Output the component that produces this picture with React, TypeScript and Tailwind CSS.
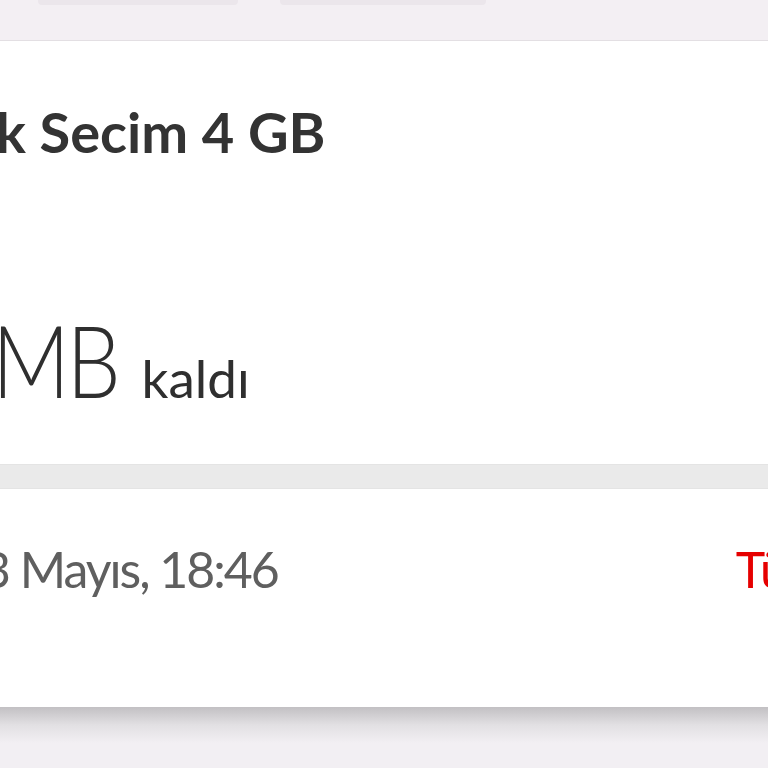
import React from 'react';

const font = { fontFamily: 'Lato, "Open Sans", sans-serif' };

export default function App() {
  return (
    <div className="w-full h-[768px] overflow-hidden bg-[#f2eff3] flex flex-col" style={font}>
      {/* strip above the card */}
      <div className="h-[41px] shrink-0 bg-[#f3eff3] border-b border-[#e3dfe3]">
        <div className="flex gap-[42px] pl-[38px]">
          <div className="w-[200px] h-[5px] bg-[#ebe6eb] rounded-b-sm" />
          <div className="w-[206px] h-[5px] bg-[#ebe6eb] rounded-b-sm" />
        </div>
      </div>

      {/* package card */}
      <div className="h-[423px] shrink-0 bg-white flex flex-col">
        <div className="pt-[63px] -ml-[4px] text-[56px] leading-none font-bold text-[#333333] whitespace-nowrap">
          k Secim 4 GB
        </div>
        <div className="mt-[149px] -ml-[8px] flex items-baseline text-[#2f2f2f] whitespace-nowrap">
          <span className="text-[101px] leading-none font-light tracking-[-4px] scale-x-[0.85] origin-left mr-[2px]">MB</span>
          <span className="text-[53px] leading-none">kaldı</span>
        </div>
      </div>

      <div className="h-[25px] shrink-0 bg-[#eaeaea] border-y border-[#e4e4e4]" />

      {/* last update row */}
      <div className="h-[218px] shrink-0 bg-white">
        <div className="pt-[55px] flex items-baseline text-[50px] leading-none whitespace-nowrap">
          <span className="-ml-[18px] tracking-[-2px] text-[#5f5f5f]">3 Mayıs, 18:46</span>
          <span className="ml-auto -mr-[89px] text-[#e60000]">Tümü</span>
        </div>
      </div>

      <div className="h-[36px] shrink-0 bg-gradient-to-b from-[#c2c0c3] via-[#e2e0e3] to-[#f2eff3]" />
      <div className="flex-1 bg-[#f2eff3]" />
    </div>
  );
}
